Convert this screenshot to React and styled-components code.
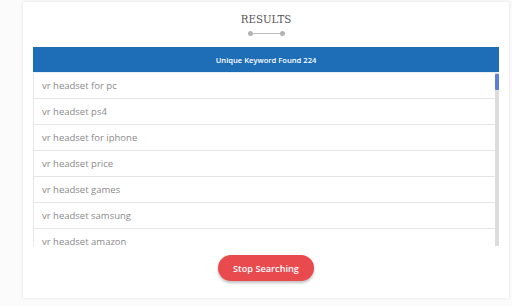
import React from 'react';
import styled, { createGlobalStyle } from 'styled-components';

const GlobalStyle = createGlobalStyle`
  html, body {
    margin: 0;
    padding: 0;
    background: #fbfbfb;
    font-family: 'Open Sans', 'Liberation Sans', sans-serif;
  }
`;

const keywords = [
  'vr headset for pc',
  'vr headset ps4',
  'vr headset for iphone',
  'vr headset price',
  'vr headset games',
  'vr headset samsung',
  'vr headset amazon',
  'vr headset xbox one',
  'vr headset android'
];

const App = () => (
  <Page>
    <GlobalStyle />
    <Card>
      <Title>RESULTS</Title>
      <Divider>
        <Dot />
        <Line />
        <Dot />
      </Divider>
      <Header>Unique Keyword Found 224</Header>
      <ListBox>
        <Rows>
          {keywords.map((k, i) => (
            <Row key={i}>{k}</Row>
          ))}
        </Rows>
        <Track>
          <Thumb />
        </Track>
      </ListBox>
      <Footer>
        <StopButton>Stop Searching</StopButton>
      </Footer>
    </Card>
  </Page>
);

export default App;

const Page = styled.div`
  width: 512px;
  height: 306px;
  padding: 2px 3px 0 23px;
  box-sizing: border-box;
`;

const Card = styled.div`
  width: 486px;
  height: 296px;
  box-sizing: border-box;
  background: #fff;
  box-shadow: 0 0 3px rgba(0, 0, 0, 0.12);
  padding: 9px 10px 0 10px;
  display: flex;
  flex-direction: column;
  align-items: stretch;
`;

const Title = styled.div`
  text-align: center;
  font-family: 'DejaVu Serif', 'Liberation Serif', serif;
  font-size: 10.2px;
  color: #555;
  padding-top: 2px;
  line-height: 14px;
  height: 14px;
`;

const Divider = styled.div`
  display: flex;
  align-items: center;
  justify-content: center;
  height: 12px;
  margin-bottom: 8px;
`;

const Dot = styled.span`
  width: 5px;
  height: 5px;
  border-radius: 50%;
  background: #b3b3b3;
`;

const Line = styled.span`
  width: 27px;
  height: 1px;
  background: #bdbdbd;
`;

const Header = styled.div`
  height: 25px;
  background: #1d6db7;
  color: #fff;
  font-family: 'Open Sans', 'Liberation Sans', sans-serif;
  font-weight: 600;
  font-size: 7.6px;
  display: flex;
  align-items: center;
  justify-content: center;
  border-bottom: 1px solid #e8eef5;
`;

const ListBox = styled.div`
  height: 173px;
  display: flex;
  overflow: hidden;
  border-left: 1px solid #e8e8e8;
`;

const Rows = styled.div`
  flex: 1;
  overflow: hidden;
`;

const Row = styled.div`
  height: 26px;
  box-sizing: border-box;
  border-bottom: 1px solid #e6e6e6;
  padding-left: 8px;
  display: flex;
  align-items: center;
  font-size: 9.5px;
  color: #8a8a8a;
`;

const Track = styled.div`
  width: 4px;
  background: #dcdcdc;
  padding-top: 1px;
  box-sizing: border-box;
`;

const Thumb = styled.div`
  height: 16px;
  background: #5a7fd4;
  border-radius: 1px;
`;

const Footer = styled.div`
  display: flex;
  justify-content: center;
  padding-top: 9px;
`;

const StopButton = styled.button`
  width: 96px;
  height: 26px;
  border: none;
  border-radius: 13px;
  background: #e84a4e;
  color: #fff;
  font-family: 'Open Sans', 'Liberation Sans', sans-serif;
  font-weight: 600;
  font-size: 9.2px;
  box-shadow: 0 2px 3px rgba(0, 0, 0, 0.25);
  cursor: pointer;
`;
